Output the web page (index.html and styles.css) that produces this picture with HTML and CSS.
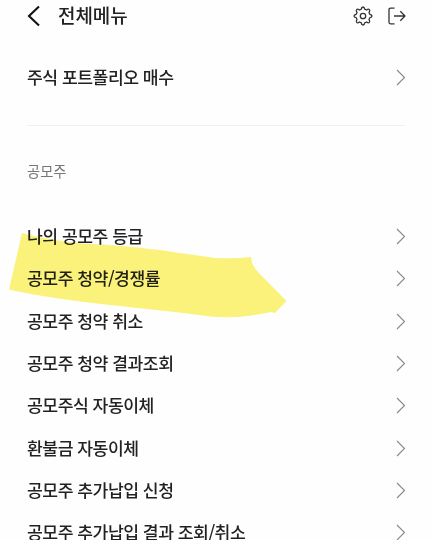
FILE: index.html
```html
<!DOCTYPE html>
<html lang="ko">
<head>
  <meta charset="UTF-8" />
  <meta name="viewport" content="width=device-width, initial-scale=1.0" />
  <title>전체메뉴</title>
  <link rel="stylesheet" href="styles.css">
</head>
<body>
<svg class="defs" width="0" height="0">
  <symbol id="chevron" viewBox="0 0 10 17">
    <path d="M1 1 L8.5 8.5 L1 16" fill="none" stroke="currentColor" stroke-width="1.1" />
  </symbol>
</svg>
<div class="screen">
  <header class="header">
    <svg class="back" viewBox="0 0 14 22">
      <path d="M12 1.5 L2 11 L12 20.5" fill="none" stroke="currentColor" stroke-width="2.1" />
    </svg>
    <h1 class="title">전체메뉴</h1>
    <div class="actions">
      <svg class="gear" viewBox="0 0 20 20">
        <path d="M8.300 3.200 Q8.600 1 10 1 Q11.400 1 11.700 3.200 L13.600 4 Q15.400 2.600 16.400 3.600 Q17.400 4.600 16 6.400 L16.800 8.300 Q19 8.600 19 10 Q19 11.400 16.800 11.700 L16 13.600 Q17.400 15.400 16.400 16.400 Q15.400 17.400 13.600 16 L11.700 16.800 Q11.400 19 10 19 Q8.600 19 8.300 16.800 L6.400 16 Q4.600 17.400 3.600 16.400 Q2.600 15.400 4 13.600 L3.200 11.700 Q1 11.400 1 10 Q1 8.600 3.200 8.300 L4 6.400 Q2.600 4.600 3.600 3.600 Q4.600 2.600 6.400 4 Z" />
        <circle cx="10" cy="10" r="2.700" />
      </svg>
      <svg class="logout" viewBox="0 0 19 18">
        <path d="M7.500 1.200 H3.500 Q2 1.200 2 2.700 V15.300 Q2 16.800 3.500 16.800 H7.500" />
        <path d="M7 9 H18 M13.300 4.300 L18 9 L13.300 13.700" />
      </svg>
    </div>
  </header>
  <ul class="menu first">
    <li><span>주식 포트폴리오 매수</span><svg class="arrow"><use href="#chevron" /></svg></li>
  </ul>
  <section class="group">
    <h2 class="group-title">공모주</h2>
    <ul class="menu">
      <li><span>나의 공모주 등급</span><svg class="arrow"><use href="#chevron" /></svg></li>
      <li><span>공모주 청약/경쟁률</span><svg class="arrow"><use href="#chevron" /></svg></li>
      <li><span>공모주 청약 취소</span><svg class="arrow"><use href="#chevron" /></svg></li>
      <li><span>공모주 청약 결과조회</span><svg class="arrow"><use href="#chevron" /></svg></li>
      <li><span>공모주식 자동이체</span><svg class="arrow"><use href="#chevron" /></svg></li>
      <li><span>환불금 자동이체</span><svg class="arrow"><use href="#chevron" /></svg></li>
      <li><span>공모주 추가납입 신청</span><svg class="arrow"><use href="#chevron" /></svg></li>
      <li><span>공모주 추가납입 결과 조회/취소</span><svg class="arrow"><use href="#chevron" /></svg></li>
    </ul>
  </section>
  <!-- marker stroke over the subscription row -->
  <svg class="marker" viewBox="0 0 280 86">
    <path d="M13 1 C40 8 62 11 82 12 C130 14 170 21 206 26 Q226 27 242 25 Q243 34 249 40 L277.500 69 L266 81 L262 80 Q236 85 224 85 Q208 86 190 83 C140 76 60 71 0 57.500 Z" />
  </svg>
</div>
</body>
</html>
```
FILE: styles.css
```css
body {
  margin: 0;
  background: #fefefe;
  font-family: "Noto Sans CJK KR", sans-serif;
  color: #222;
}
.defs {
  position: absolute;
}
.screen {
  position: relative;
  height: 540px;
  padding: 0 27px;
  box-sizing: border-box;
  overflow: hidden;
}
.header {
  display: flex;
  align-items: center;
  height: 32px;
}
.back {
  width: 14px;
  height: 22px;
  color: #111;
}
.title {
  margin: 0 0 0 17px;
  padding-bottom: 3px;
  font-size: 19px;
  font-weight: 500;
  line-height: 29px;
  letter-spacing: -0.1px;
}
.actions {
  display: flex;
  align-items: center;
  gap: 14px;
  margin-right: -0.5px;
  margin-left: auto;
}
.gear,
.logout {
  width: 20px;
  height: 20px;
  fill: none;
  stroke: #333;
  stroke-width: 1.3;
  stroke-linejoin: round;
}
.logout {
  width: 19px;
  height: 18px;
}
.menu {
  margin: 0;
  padding: 0;
  list-style: none;
}
.menu li {
  display: flex;
  align-items: center;
  justify-content: space-between;
  height: 42.3px;
  font-size: 17.2px;
  font-weight: 500;
  letter-spacing: -0.5px;
  white-space: nowrap;
}
.menu span {
  padding-bottom: 2px;
}
.arrow {
  width: 10px;
  height: 17px;
  margin-right: -0.5px;
  color: #888;
}
.first {
  padding: 24px 0 26.7px;
  border-bottom: 1px solid #efefef;
}
.group-title {
  margin: 0;
  padding: 34px 0 33.4px;
  font-size: 14.3px;
  font-weight: 400;
  line-height: 22px;
  color: #777;
}
.marker {
  position: absolute;
  top: 232px;
  left: 9px;
  width: 280px;
  height: 86px;
  fill: #fcf37c;
  mix-blend-mode: multiply;
}
```
